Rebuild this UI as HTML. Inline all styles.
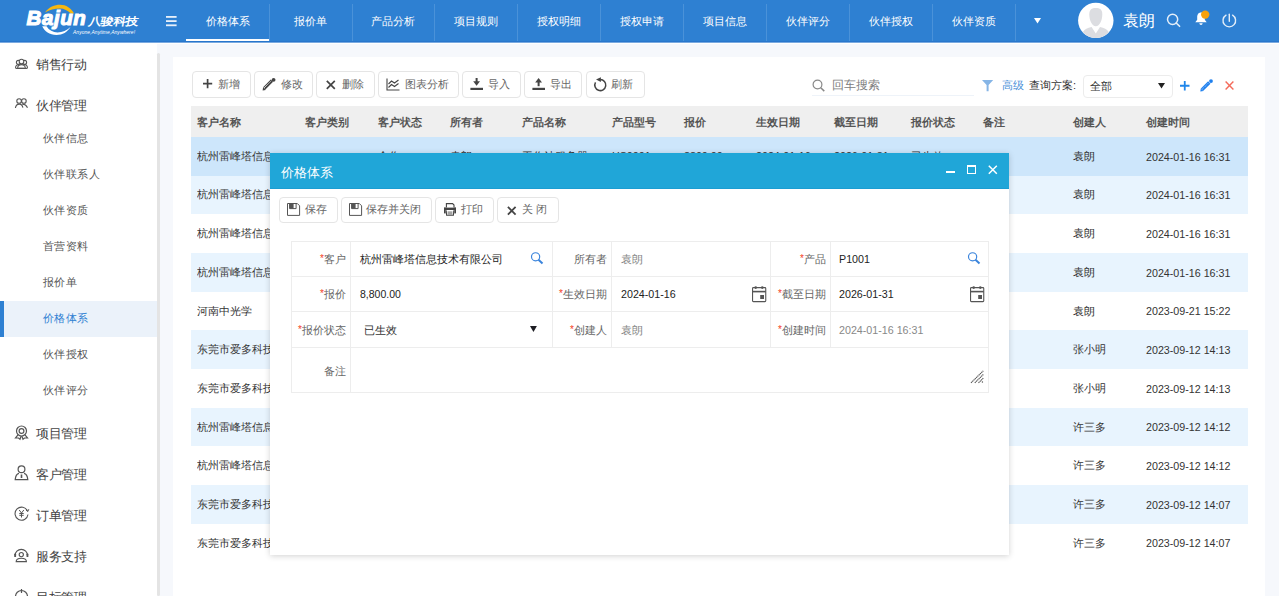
<!DOCTYPE html><html><head><meta charset="utf-8"><style>
*{box-sizing:border-box;margin:0;padding:0}
html,body{width:1279px;height:596px;overflow:hidden;background:#f6f8fc;font-family:"Liberation Sans",sans-serif;color:#333;position:relative}
div{position:absolute;white-space:nowrap}
svg{position:absolute;overflow:visible}
</style></head><body>
<div style="left:0;top:0;width:1279px;height:42px;background:#2e80d2"></div>
<div style="left:0;top:41px;width:1279px;height:1px;background:#2876cc"></div>
<div style="left:0;top:42px;width:1279px;height:1px;background:#7aaae0"></div>
<div style="left:0;top:43px;width:1279px;height:1px;background:#fff"></div>
<svg style="left:0;top:0" width="160" height="42" viewBox="0 0 160 42">
<path d="M45 12.4 C49 7 54.5 4.8 60 4.8 C66 4.8 71.5 8.2 74 13.6 L70.8 13.6 C68 10.4 64 8.4 60 8.4 C54.5 8.4 49.5 10 45 12.4Z" fill="#f6b70f"/>
<path d="M42.2 26.3 L46.5 26.3 C49 30.3 53 32.4 57.5 32.4 C62.5 32.4 67 30.5 70.5 27 C67.5 32 62.5 35 56.5 35 C49.5 35 44.5 31.5 42.2 26.3Z" fill="#fff"/>
<text x="26.5" y="24.8" font-family="Liberation Sans" font-style="italic" font-weight="bold" font-size="20.5" fill="#fff" stroke="#fff" stroke-width="1.1" letter-spacing="0.6">Bajun</text>
<g transform="translate(88,24.6) skewX(-10) scale(1.08,0.9)"><text x="0" y="0" font-family="Liberation Sans" font-weight="bold" font-size="12" fill="#fff" letter-spacing="-0.6">八骏科技</text></g>
<text x="73" y="33.8" font-family="Liberation Sans" font-style="italic" font-size="4.9" fill="#fff" textLength="62">Anyone,Anytime,Anywhere!</text>
</svg>
<svg style="left:165.5px;top:16px" width="12" height="11"><rect x="0" y="0" width="10.6" height="1.8" fill="#e8f0fa"/><rect x="0" y="4.2" width="10.6" height="1.8" fill="#e8f0fa"/><rect x="0" y="8.4" width="10.6" height="1.8" fill="#e8f0fa"/></svg>
<div style="left:186.00px;top:15.5px;width:83px;text-align:center;font-size:11px;line-height:11px;color:#fff">价格体系</div>
<div style="left:269px;top:4px;width:1px;height:37px;background:#4a92d9"></div>
<div style="left:268.93px;top:15.5px;width:83px;text-align:center;font-size:11px;line-height:11px;color:#fff">报价单</div>
<div style="left:352px;top:4px;width:1px;height:37px;background:#4a92d9"></div>
<div style="left:351.86px;top:15.5px;width:83px;text-align:center;font-size:11px;line-height:11px;color:#fff">产品分析</div>
<div style="left:434px;top:4px;width:1px;height:37px;background:#4a92d9"></div>
<div style="left:434.79px;top:15.5px;width:83px;text-align:center;font-size:11px;line-height:11px;color:#fff">项目规则</div>
<div style="left:517px;top:4px;width:1px;height:37px;background:#4a92d9"></div>
<div style="left:517.72px;top:15.5px;width:83px;text-align:center;font-size:11px;line-height:11px;color:#fff">授权明细</div>
<div style="left:600px;top:4px;width:1px;height:37px;background:#4a92d9"></div>
<div style="left:600.65px;top:15.5px;width:83px;text-align:center;font-size:11px;line-height:11px;color:#fff">授权申请</div>
<div style="left:683px;top:4px;width:1px;height:37px;background:#4a92d9"></div>
<div style="left:683.58px;top:15.5px;width:83px;text-align:center;font-size:11px;line-height:11px;color:#fff">项目信息</div>
<div style="left:766px;top:4px;width:1px;height:37px;background:#4a92d9"></div>
<div style="left:766.51px;top:15.5px;width:83px;text-align:center;font-size:11px;line-height:11px;color:#fff">伙伴评分</div>
<div style="left:849px;top:4px;width:1px;height:37px;background:#4a92d9"></div>
<div style="left:849.44px;top:15.5px;width:83px;text-align:center;font-size:11px;line-height:11px;color:#fff">伙伴授权</div>
<div style="left:932px;top:4px;width:1px;height:37px;background:#4a92d9"></div>
<div style="left:932.37px;top:15.5px;width:83px;text-align:center;font-size:11px;line-height:11px;color:#fff">伙伴资质</div>
<div style="left:1015px;top:4px;width:1px;height:37px;background:#4a92d9"></div>
<div style="left:186px;top:39px;width:83px;height:2px;background:#fff"></div>
<svg style="left:1034px;top:17.5px" width="7" height="5.5"><path d="M0 0H7L3.5 5.5Z" fill="#fff"/></svg>
<svg style="left:1077px;top:2px" width="37" height="37" viewBox="0 0 37 37">
<defs><clipPath id="cc"><circle cx="18.8" cy="18.4" r="17.6"/></clipPath></defs>
<circle cx="18.8" cy="18.4" r="17.7" fill="#fff"/>
<g clip-path="url(#cc)" fill="#dcdde1">
<path d="M12.3 12.2 C12.3 7.6 14.8 6 18.8 6 C22.8 6 25.3 7.6 25.3 12.2 C25.3 18.2 22.6 24.2 18.8 24.2 C15 24.2 12.3 18.2 12.3 12.2Z"/>
<path d="M6.2 29.5 C7.5 27 10.5 26 14.6 25 L18.8 31.5 L23 25 C27.1 26 30.1 27 31.4 29.5 L32 40 H5.5 Z"/>
</g>
</svg>
<div style="left:1123px;top:13px;font-size:16px;line-height:16px;color:#fff;font-weight:normal;">袁朗</div>
<svg style="left:1166px;top:13px" width="16" height="16"><circle cx="6.6" cy="6.3" r="5.1" stroke="#e4eef9" stroke-width="1.5" fill="none"/><path d="M10.2 10 L13.6 13.3" stroke="#e4eef9" stroke-width="1.6" stroke-linecap="round"/></svg>
<svg style="left:1193px;top:9px" width="20" height="18" viewBox="0 0 20 18">
<path d="M8 3.5 C5.2 3.5 4.2 5.8 4.2 8.3 L4.2 10.8 L2.3 13.3 L13.7 13.3 L11.8 10.8 L11.8 8.3 C11.8 5.8 10.8 3.5 8 3.5Z" fill="#fff"/>
<path d="M6.4 14.2 H9.6 C9.6 15.4 8.8 15.9 8 15.9 C7.2 15.9 6.4 15.4 6.4 14.2Z" fill="#fff"/>
<circle cx="12.2" cy="5.6" r="4.2" fill="#f6a10c"/>
</svg>
<svg style="left:1221px;top:12px" width="16" height="16"><path d="M5 3.2 A6.3 6.3 0 1 0 11.6 3.2" stroke="#e4eef9" stroke-width="1.4" fill="none" stroke-linecap="round"/><path d="M8.3 2.3 V9.2" stroke="#e4eef9" stroke-width="1.4" stroke-linecap="round"/></svg>
<div style="left:0;top:44px;width:157px;height:552px;background:#fff"></div>
<div style="left:157px;top:53px;width:3px;height:543px;background:#e4e4e4;border-radius:1.5px"></div>
<div style="left:36px;top:58px;font-size:13px;line-height:13px;color:#444;font-weight:normal;letter-spacing:-0.4px">销售行动</div>
<div style="left:36px;top:99px;font-size:13px;line-height:13px;color:#444;font-weight:normal;letter-spacing:-0.4px">伙伴管理</div>
<div style="left:36px;top:426.5px;font-size:13px;line-height:13px;color:#444;font-weight:normal;letter-spacing:-0.4px">项目管理</div>
<div style="left:36px;top:468px;font-size:13px;line-height:13px;color:#444;font-weight:normal;letter-spacing:-0.4px">客户管理</div>
<div style="left:36px;top:509px;font-size:13px;line-height:13px;color:#444;font-weight:normal;letter-spacing:-0.4px">订单管理</div>
<div style="left:36px;top:550px;font-size:13px;line-height:13px;color:#444;font-weight:normal;letter-spacing:-0.4px">服务支持</div>
<div style="left:36px;top:591px;font-size:13px;line-height:13px;color:#444;font-weight:normal;letter-spacing:-0.4px">目标管理</div>
<div style="left:0;top:301px;width:157px;height:36px;background:#ebf2fa"></div>
<div style="left:0;top:301px;width:4px;height:36px;background:#2e80d2"></div>
<div style="left:43px;top:133px;font-size:11px;line-height:11px;color:#555;font-weight:normal;letter-spacing:0.4px">伙伴信息</div>
<div style="left:43px;top:169px;font-size:11px;line-height:11px;color:#555;font-weight:normal;letter-spacing:0.4px">伙伴联系人</div>
<div style="left:43px;top:205px;font-size:11px;line-height:11px;color:#555;font-weight:normal;letter-spacing:0.4px">伙伴资质</div>
<div style="left:43px;top:241px;font-size:11px;line-height:11px;color:#555;font-weight:normal;letter-spacing:0.4px">首营资料</div>
<div style="left:43px;top:277px;font-size:11px;line-height:11px;color:#555;font-weight:normal;letter-spacing:0.4px">报价单</div>
<div style="left:43px;top:313px;font-size:11px;line-height:11px;color:#2e80d2;font-weight:normal;letter-spacing:0.4px">价格体系</div>
<div style="left:43px;top:349px;font-size:11px;line-height:11px;color:#555;font-weight:normal;letter-spacing:0.4px">伙伴授权</div>
<div style="left:43px;top:384.5px;font-size:11px;line-height:11px;color:#555;font-weight:normal;letter-spacing:0.4px">伙伴评分</div>
<svg style="left:12px;top:55px" width="20" height="18" viewBox="0 0 20 18" fill="none" stroke="#555" stroke-width="1.1">
<circle cx="6.4" cy="7.4" r="2"/><circle cx="12.6" cy="7.4" r="2"/>
<path d="M3.6 13.3 C3.3 11.2 4.5 9.8 6.2 9.6 M15.4 13.3 C15.7 11.2 14.5 9.8 12.8 9.6"/>
<circle cx="9.5" cy="6.6" r="2.3" fill="#fff"/>
<path d="M5.6 13.4 C5.6 11 7.2 9.6 9.5 9.6 C11.8 9.6 13.4 11 13.4 13.4 Z" fill="#fff"/>
<path d="M3.8 13.4 H15.2"/>
</svg>
<svg style="left:12px;top:95px" width="20" height="18" viewBox="0 0 20 18" fill="none" stroke="#555" stroke-width="1.1">
<circle cx="7.1" cy="6" r="2.3"/><circle cx="11.9" cy="6" r="2.3"/>
<path d="M3.4 13 C3.8 10.4 5.4 9.1 7.4 9.1 C9.2 9.1 10.4 10.3 10.9 12.6"/>
<path d="M10.2 9.1 C12.6 9.1 14.5 10.5 15.5 12.8"/>
</svg>
<svg style="left:14px;top:425px" width="15" height="15" viewBox="0 0 15 15" fill="none" stroke="#555" stroke-width="1.2">
<circle cx="7.5" cy="6" r="5"/><circle cx="7.5" cy="6" r="2.4"/>
<path d="M4 9.8 L1.5 13 L4.5 13 L6 14.3 L7.2 11"/><path d="M11 9.8 L13.5 13 L10.5 13 L9 14.3 L7.8 11"/>
</svg>
<svg style="left:14px;top:465px" width="15" height="16" viewBox="0 0 15 16" fill="none" stroke="#555" stroke-width="1.2">
<circle cx="7.5" cy="4.3" r="3.4"/>
<path d="M5 8.4 C2.5 9 1.5 11.5 1.2 14.6 H13.8 C13.5 11.5 12.5 9 10 8.4"/>
<path d="M7.5 9.5 V13" stroke-width="1.6"/>
</svg>
<svg style="left:14px;top:506px" width="15" height="15" viewBox="0 0 15 15" fill="none" stroke="#555" stroke-width="1.1">
<path d="M13.5 5 A6.5 6.5 0 1 0 14 8.5"/><path d="M12 4 L13.8 5.6 L14.8 3.2" stroke-width="1"/>
<path d="M5.2 4 L7.5 7 L9.8 4 M7.5 7 V11.5 M5.3 7.5 H9.7 M5.3 9.3 H9.7" stroke-width="1"/>
</svg>
<svg style="left:14px;top:547px" width="15" height="16" viewBox="0 0 15 16" fill="none" stroke="#555" stroke-width="1.15">
<path d="M1.1 8.6 A6.2 6.2 0 0 1 13.5 8.6"/><circle cx="7.3" cy="7.6" r="2.1"/>
<path d="M2.2 14.6 C2.2 12.2 4.4 11.2 7.3 11.2 C10.2 11.2 12.4 12.2 12.4 14.6 Z"/>
<rect x="0.2" y="6.6" width="1.9" height="3.4" rx="0.6" fill="#555" stroke="none"/><rect x="12.5" y="6.6" width="1.9" height="3.4" rx="0.6" fill="#555" stroke="none"/>
</svg>
<svg style="left:14px;top:589px" width="15" height="15" viewBox="0 0 15 15" fill="none" stroke="#555" stroke-width="1.2">
<circle cx="7.5" cy="7.5" r="6"/><path d="M7.5 0 V4"/>
</svg>
<div style="left:173px;top:57px;width:1092px;height:539px;background:#fff"></div>
<div style="left:192px;top:71px;width:59px;height:27px;border:1px solid #e5e5e5;border-radius:4px;background:#fff"></div>
<div style="left:218px;top:79px;font-size:11px;line-height:11px;color:#666;font-weight:normal;">新增</div>
<div style="left:254px;top:71px;width:59px;height:27px;border:1px solid #e5e5e5;border-radius:4px;background:#fff"></div>
<div style="left:281px;top:79px;font-size:11px;line-height:11px;color:#666;font-weight:normal;">修改</div>
<div style="left:316px;top:71px;width:59px;height:27px;border:1px solid #e5e5e5;border-radius:4px;background:#fff"></div>
<div style="left:342px;top:79px;font-size:11px;line-height:11px;color:#666;font-weight:normal;">删除</div>
<div style="left:378px;top:71px;width:81px;height:27px;border:1px solid #e5e5e5;border-radius:4px;background:#fff"></div>
<div style="left:405px;top:79px;font-size:11px;line-height:11px;color:#666;font-weight:normal;">图表分析</div>
<div style="left:462px;top:71px;width:59px;height:27px;border:1px solid #e5e5e5;border-radius:4px;background:#fff"></div>
<div style="left:488px;top:79px;font-size:11px;line-height:11px;color:#666;font-weight:normal;">导入</div>
<div style="left:524px;top:71px;width:58px;height:27px;border:1px solid #e5e5e5;border-radius:4px;background:#fff"></div>
<div style="left:550px;top:79px;font-size:11px;line-height:11px;color:#666;font-weight:normal;">导出</div>
<div style="left:586px;top:71px;width:59px;height:27px;border:1px solid #e5e5e5;border-radius:4px;background:#fff"></div>
<div style="left:611px;top:79px;font-size:11px;line-height:11px;color:#666;font-weight:normal;">刷新</div>
<svg style="left:203px;top:79px" width="10" height="10"><path d="M4.6 0V9.2M0 4.6H9.2" stroke="#444" stroke-width="1.7"/></svg>
<svg style="left:258px;top:74px" width="22" height="20" viewBox="0 0 22 20"><path d="M6.3 14.3 L13.9 6.7" stroke="#444" stroke-width="3.2"/><path d="M4.6 16.4 L5.1 13.2 L7.8 15.9Z" fill="#444"/><path d="M6.0 14.0 L13.0 7.1" stroke="#fff" stroke-width="0.9" stroke-dasharray="1.1 0.5"/><circle cx="15.6" cy="5.8" r="1.9" fill="#444"/></svg>
<svg style="left:326px;top:80px" width="10" height="10"><path d="M0.8 0.8L8.8 8.8M8.8 0.8L0.8 8.8" stroke="#444" stroke-width="1.7"/></svg>
<svg style="left:386px;top:78px" width="14" height="13" viewBox="0 0 14 13" fill="none" stroke="#444" stroke-width="1.1"><path d="M1 0.5V12H13.5"/><path d="M2.5 6 L5.5 3 L8.5 5 L12.5 2"/><path d="M2.5 9.5 L5.5 6.5 L8.5 8.5 L12.5 5.5"/></svg>
<svg style="left:470px;top:78px" width="14" height="13" viewBox="0 0 14 13"><path d="M6.6 0V4.5" stroke="#444" stroke-width="2"/><path d="M3.2 3.2 L10 3.2 L6.6 7.7Z" fill="#444"/><rect x="0.4" y="9.8" width="12.6" height="2.2" fill="#444"/></svg>
<svg style="left:532px;top:78px" width="14" height="13" viewBox="0 0 14 13"><path d="M6.6 3.5V8.2" stroke="#444" stroke-width="2"/><path d="M3.2 4.5 L10 4.5 L6.6 0Z" fill="#444"/><rect x="0.4" y="9.8" width="12.6" height="2.2" fill="#444"/></svg>
<svg style="left:590px;top:74px" width="22" height="20" viewBox="0 0 22 20"><path d="M5.5 8.4 A5.5 5.5 0 1 0 10.2 5.6" fill="none" stroke="#444" stroke-width="1.5"/><path d="M6 5.4 L10.9 3.2 L10.9 7.9Z" fill="#444"/></svg>
<svg style="left:812px;top:79px" width="14" height="14"><circle cx="5.5" cy="5.5" r="4.4" stroke="#888" stroke-width="1.2" fill="none"/><path d="M8.7 8.7 L12.3 12.1" stroke="#888" stroke-width="1.5"/></svg>
<div style="left:832px;top:79px;font-size:12px;line-height:12px;color:#808080;font-weight:normal;">回车搜索</div>
<div style="left:812px;top:95px;width:162px;height:1px;background:#eef3f9"></div>
<svg style="left:981.8px;top:80px" width="12" height="12"><path d="M0 0H11.2L6.6 5V11.2H4.6V5Z" fill="#86b5e6"/></svg>
<div style="left:1002px;top:80px;font-size:11px;line-height:11px;color:#4a90d9;font-weight:normal;">高级</div>
<div style="left:1029px;top:80px;font-size:11px;line-height:11px;color:#333;font-weight:normal;">查询方案:</div>
<div style="left:1083px;top:75px;width:90px;height:23px;border:1px solid #ececec;border-radius:4px;background:#fff"></div>
<div style="left:1090px;top:81px;font-size:11px;line-height:11px;color:#333;font-weight:normal;">全部</div>
<svg style="left:1158px;top:83px" width="7" height="6"><path d="M0 0H7L3.5 5.6Z" fill="#222"/></svg>
<svg style="left:1179.5px;top:81px" width="10" height="10"><path d="M4.75 0V9.5M0 4.75H9.5" stroke="#1f86ea" stroke-width="1.8"/></svg>
<svg style="left:1196px;top:74px" width="22" height="20" viewBox="0 0 22 20"><path d="M6.1 15.6 L13.3 8.5" stroke="#1f80ee" stroke-width="3.4"/><path d="M4.3 17.6 L4.8 14.4 L7.5 17.1Z" fill="#1f80ee"/><path d="M6.2 15.2 L12.6 8.9" stroke="#cfe4fc" stroke-width="0.7" stroke-dasharray="0.9 0.6"/><circle cx="15" cy="7.1" r="1.9" fill="#1f80ee"/></svg>
<svg style="left:1224.5px;top:81px" width="10" height="10"><path d="M0.6 0.6L8.4 8.4M8.4 0.6L0.6 8.4" stroke="#f46b5b" stroke-width="1.45"/></svg>
<div style="left:191px;top:106px;width:1057px;height:31px;background:#efefef"></div>
<div style="left:197px;top:117px;font-size:11px;line-height:11px;color:#555;font-weight:bold;">客户名称</div>
<div style="left:305px;top:117px;font-size:11px;line-height:11px;color:#555;font-weight:bold;">客户类别</div>
<div style="left:378px;top:117px;font-size:11px;line-height:11px;color:#555;font-weight:bold;">客户状态</div>
<div style="left:450px;top:117px;font-size:11px;line-height:11px;color:#555;font-weight:bold;">所有者</div>
<div style="left:522px;top:117px;font-size:11px;line-height:11px;color:#555;font-weight:bold;">产品名称</div>
<div style="left:612px;top:117px;font-size:11px;line-height:11px;color:#555;font-weight:bold;">产品型号</div>
<div style="left:684px;top:117px;font-size:11px;line-height:11px;color:#555;font-weight:bold;">报价</div>
<div style="left:756px;top:117px;font-size:11px;line-height:11px;color:#555;font-weight:bold;">生效日期</div>
<div style="left:834px;top:117px;font-size:11px;line-height:11px;color:#555;font-weight:bold;">截至日期</div>
<div style="left:911px;top:117px;font-size:11px;line-height:11px;color:#555;font-weight:bold;">报价状态</div>
<div style="left:983px;top:117px;font-size:11px;line-height:11px;color:#555;font-weight:bold;">备注</div>
<div style="left:1073px;top:117px;font-size:11px;line-height:11px;color:#555;font-weight:bold;">创建人</div>
<div style="left:1146px;top:117px;font-size:11px;line-height:11px;color:#555;font-weight:bold;">创建时间</div>
<div style="left:191px;top:137.00px;width:1057px;height:38.68px;background:#cde6fb"></div>
<div style="left:197px;top:150.8px;font-size:10.7px;line-height:10.7px;color:#333;font-weight:normal;width:73px;overflow:hidden">杭州雷峰塔信息技术有限公司</div>
<div style="left:378px;top:150.6px;font-size:10.7px;line-height:10.7px;color:#333;font-weight:normal;">合作</div>
<div style="left:450px;top:150.6px;font-size:10.7px;line-height:10.7px;color:#333;font-weight:normal;">袁朗</div>
<div style="left:522px;top:150.6px;font-size:10.7px;line-height:10.7px;color:#333;font-weight:normal;">工作站服务器</div>
<div style="left:612px;top:150.9px;font-size:10.7px;line-height:10.7px;color:#333;font-weight:normal;">HS0001</div>
<div style="left:684px;top:150.9px;font-size:10.7px;line-height:10.7px;color:#333;font-weight:normal;">8800.00</div>
<div style="left:756px;top:150.9px;font-size:10.7px;line-height:10.7px;color:#333;font-weight:normal;">2024-01-16</div>
<div style="left:834px;top:150.9px;font-size:10.7px;line-height:10.7px;color:#333;font-weight:normal;">2026-01-31</div>
<div style="left:911px;top:150.6px;font-size:10.7px;line-height:10.7px;color:#333;font-weight:normal;">已生效</div>
<div style="left:1073px;top:150.8px;font-size:10.7px;line-height:10.7px;color:#333;font-weight:normal;">袁朗</div>
<div style="left:1146px;top:151.5px;font-size:10.7px;line-height:10.7px;color:#333;font-weight:normal;">2024-01-16 16:31</div>
<div style="left:191px;top:175.68px;width:1057px;height:38.68px;background:#e8f4fe"></div>
<div style="left:197px;top:189.48px;font-size:10.7px;line-height:10.7px;color:#333;font-weight:normal;width:73px;overflow:hidden">杭州雷峰塔信息技术有限公司</div>
<div style="left:1073px;top:189.48px;font-size:10.7px;line-height:10.7px;color:#333;font-weight:normal;">袁朗</div>
<div style="left:1146px;top:190.18px;font-size:10.7px;line-height:10.7px;color:#333;font-weight:normal;">2024-01-16 16:31</div>
<div style="left:191px;top:214.36px;width:1057px;height:38.68px;background:#fff"></div>
<div style="left:197px;top:228.16px;font-size:10.7px;line-height:10.7px;color:#333;font-weight:normal;width:73px;overflow:hidden">杭州雷峰塔信息技术有限公司</div>
<div style="left:1073px;top:228.16px;font-size:10.7px;line-height:10.7px;color:#333;font-weight:normal;">袁朗</div>
<div style="left:1146px;top:228.86px;font-size:10.7px;line-height:10.7px;color:#333;font-weight:normal;">2024-01-16 16:31</div>
<div style="left:191px;top:253.04px;width:1057px;height:38.68px;background:#e8f4fe"></div>
<div style="left:197px;top:266.84px;font-size:10.7px;line-height:10.7px;color:#333;font-weight:normal;width:73px;overflow:hidden">杭州雷峰塔信息技术有限公司</div>
<div style="left:1073px;top:266.84px;font-size:10.7px;line-height:10.7px;color:#333;font-weight:normal;">袁朗</div>
<div style="left:1146px;top:267.54px;font-size:10.7px;line-height:10.7px;color:#333;font-weight:normal;">2024-01-16 16:31</div>
<div style="left:191px;top:291.72px;width:1057px;height:38.68px;background:#fff"></div>
<div style="left:197px;top:305.52px;font-size:10.7px;line-height:10.7px;color:#333;font-weight:normal;width:73px;overflow:hidden">河南中光学</div>
<div style="left:1073px;top:305.52px;font-size:10.7px;line-height:10.7px;color:#333;font-weight:normal;">袁朗</div>
<div style="left:1146px;top:306.22px;font-size:10.7px;line-height:10.7px;color:#333;font-weight:normal;">2023-09-21 15:22</div>
<div style="left:191px;top:330.40px;width:1057px;height:38.68px;background:#e8f4fe"></div>
<div style="left:197px;top:344.2px;font-size:10.7px;line-height:10.7px;color:#333;font-weight:normal;width:73px;overflow:hidden">东莞市爱多科技有限公司</div>
<div style="left:1073px;top:344.2px;font-size:10.7px;line-height:10.7px;color:#333;font-weight:normal;">张小明</div>
<div style="left:1146px;top:344.9px;font-size:10.7px;line-height:10.7px;color:#333;font-weight:normal;">2023-09-12 14:13</div>
<div style="left:191px;top:369.08px;width:1057px;height:38.68px;background:#fff"></div>
<div style="left:197px;top:382.88px;font-size:10.7px;line-height:10.7px;color:#333;font-weight:normal;width:73px;overflow:hidden">东莞市爱多科技有限公司</div>
<div style="left:1073px;top:382.88px;font-size:10.7px;line-height:10.7px;color:#333;font-weight:normal;">张小明</div>
<div style="left:1146px;top:383.58px;font-size:10.7px;line-height:10.7px;color:#333;font-weight:normal;">2023-09-12 14:13</div>
<div style="left:191px;top:407.76px;width:1057px;height:38.68px;background:#e8f4fe"></div>
<div style="left:197px;top:421.56px;font-size:10.7px;line-height:10.7px;color:#333;font-weight:normal;width:73px;overflow:hidden">杭州雷峰塔信息技术有限公司</div>
<div style="left:1073px;top:421.56px;font-size:10.7px;line-height:10.7px;color:#333;font-weight:normal;">许三多</div>
<div style="left:1146px;top:422.26px;font-size:10.7px;line-height:10.7px;color:#333;font-weight:normal;">2023-09-12 14:12</div>
<div style="left:191px;top:446.44px;width:1057px;height:38.68px;background:#fff"></div>
<div style="left:197px;top:460.24px;font-size:10.7px;line-height:10.7px;color:#333;font-weight:normal;width:73px;overflow:hidden">杭州雷峰塔信息技术有限公司</div>
<div style="left:1073px;top:460.24px;font-size:10.7px;line-height:10.7px;color:#333;font-weight:normal;">许三多</div>
<div style="left:1146px;top:460.94px;font-size:10.7px;line-height:10.7px;color:#333;font-weight:normal;">2023-09-12 14:12</div>
<div style="left:191px;top:485.12px;width:1057px;height:38.68px;background:#e8f4fe"></div>
<div style="left:197px;top:498.92px;font-size:10.7px;line-height:10.7px;color:#333;font-weight:normal;width:73px;overflow:hidden">东莞市爱多科技有限公司</div>
<div style="left:1073px;top:498.92px;font-size:10.7px;line-height:10.7px;color:#333;font-weight:normal;">许三多</div>
<div style="left:1146px;top:499.62px;font-size:10.7px;line-height:10.7px;color:#333;font-weight:normal;">2023-09-12 14:07</div>
<div style="left:191px;top:523.80px;width:1057px;height:38.68px;background:#fff"></div>
<div style="left:197px;top:537.6px;font-size:10.7px;line-height:10.7px;color:#333;font-weight:normal;width:73px;overflow:hidden">东莞市爱多科技有限公司</div>
<div style="left:1073px;top:537.6px;font-size:10.7px;line-height:10.7px;color:#333;font-weight:normal;">许三多</div>
<div style="left:1146px;top:538.3px;font-size:10.7px;line-height:10.7px;color:#333;font-weight:normal;">2023-09-12 14:07</div>
<div style="left:270px;top:153px;width:739px;height:402px;background:#fff;box-shadow:0 1px 6px rgba(0,0,0,.18)"></div>
<div style="left:270px;top:153px;width:739px;height:36px;background:#20a6d8"></div>
<div style="left:270px;top:188px;width:739px;height:1px;background:#1b9dd2"></div>
<div style="left:281px;top:166px;font-size:13px;line-height:13px;color:#fff;font-weight:normal;">价格体系</div>
<div style="left:946px;top:171px;width:9px;height:2px;background:#fff"></div>
<div style="left:967px;top:165px;width:9px;height:9px;border:1px solid #fff;border-top-width:2px"></div>
<svg style="left:988px;top:165px" width="10" height="10"><path d="M0.8 0.8L8.8 8.8M8.8 0.8L0.8 8.8" stroke="#fff" stroke-width="1.5"/></svg>
<div style="left:279px;top:197px;width:59px;height:26px;border:1px solid #e5e5e5;border-radius:4px;background:#fff"></div>
<div style="left:305px;top:204px;font-size:11px;line-height:11px;color:#666;font-weight:normal;">保存</div>
<div style="left:341px;top:197px;width:91px;height:26px;border:1px solid #e5e5e5;border-radius:4px;background:#fff"></div>
<div style="left:366px;top:204px;font-size:11px;line-height:11px;color:#666;font-weight:normal;">保存并关闭</div>
<div style="left:435px;top:197px;width:59px;height:26px;border:1px solid #e5e5e5;border-radius:4px;background:#fff"></div>
<div style="left:461px;top:204px;font-size:11px;line-height:11px;color:#666;font-weight:normal;">打印</div>
<div style="left:497px;top:197px;width:62px;height:26px;border:1px solid #e5e5e5;border-radius:4px;background:#fff"></div>
<div style="left:522px;top:204px;font-size:11px;line-height:11px;color:#666;font-weight:normal;">关 闭</div>
<svg style="left:287px;top:203px" width="14" height="14" viewBox="0 0 14 14" fill="none" stroke="#555" stroke-width="1"><path d="M0.5 0.5H10.3L12.6 2.8V12.4H0.5Z"/><path d="M2.6 0.5V5.6H9.1V0.5"/><rect x="2.6" y="0.5" width="4" height="5.1" fill="#555" stroke="none"/></svg>
<svg style="left:349px;top:203px" width="14" height="14" viewBox="0 0 14 14" fill="none" stroke="#555" stroke-width="1"><path d="M0.5 0.5H10.3L12.6 2.8V12.4H0.5Z"/><path d="M2.6 0.5V5.6H9.1V0.5"/><rect x="2.6" y="0.5" width="4" height="5.1" fill="#555" stroke="none"/></svg>
<svg style="left:444px;top:203px" width="14" height="14" viewBox="0 0 14 14"><path d="M2.4 4.6V0.6H8.6L10 2V4.6" fill="none" stroke="#444" stroke-width="1.1"/><rect x="0" y="4.6" width="12" height="2.4" fill="#444"/><rect x="0" y="4.6" width="1.7" height="5.8" fill="#444"/><rect x="10.3" y="4.6" width="1.7" height="5.8" fill="#444"/><path d="M2.2 7.4 L2.6 12.3 H9.4 L9.8 7.4" fill="none" stroke="#444" stroke-width="1.1"/><path d="M3.6 9.1H8.4M3.6 10.9H8.4" stroke="#555" stroke-width="0.9"/></svg>
<svg style="left:507px;top:205.5px" width="10" height="10"><path d="M0.9 0.9L8.6 8.6M8.6 0.9L0.9 8.6" stroke="#444" stroke-width="1.8"/></svg>
<div style="left:291px;top:241px;width:698px;height:152px;border:1px solid #ededed"></div>
<div style="left:291px;top:276px;width:698px;height:1px;background:#ededed"></div>
<div style="left:291px;top:311px;width:698px;height:1px;background:#ededed"></div>
<div style="left:291px;top:347px;width:698px;height:1px;background:#ededed"></div>
<div style="left:350px;top:241px;width:1px;height:152px;background:#ededed"></div>
<div style="left:552px;top:241px;width:1px;height:106px;background:#ededed"></div>
<div style="left:611px;top:241px;width:1px;height:106px;background:#ededed"></div>
<div style="left:770px;top:241px;width:1px;height:106px;background:#ededed"></div>
<div style="left:830px;top:241px;width:1px;height:106px;background:#ededed"></div>
<div style="left:226px;top:254px;width:120px;text-align:right;font-size:11px;line-height:11px;color:#666"><span style="color:#f4401c;font-size:10px;position:relative;top:-1px">*</span>客户</div>
<div style="left:487px;top:254px;width:120px;text-align:right;font-size:11px;line-height:11px;color:#666">所有者</div>
<div style="left:706px;top:254px;width:120px;text-align:right;font-size:11px;line-height:11px;color:#666"><span style="color:#f4401c;font-size:10px;position:relative;top:-1px">*</span>产品</div>
<div style="left:226px;top:289px;width:120px;text-align:right;font-size:11px;line-height:11px;color:#666"><span style="color:#f4401c;font-size:10px;position:relative;top:-1px">*</span>报价</div>
<div style="left:487px;top:289px;width:120px;text-align:right;font-size:11px;line-height:11px;color:#666"><span style="color:#f4401c;font-size:10px;position:relative;top:-1px">*</span>生效日期</div>
<div style="left:706px;top:289px;width:120px;text-align:right;font-size:11px;line-height:11px;color:#666"><span style="color:#f4401c;font-size:10px;position:relative;top:-1px">*</span>截至日期</div>
<div style="left:226px;top:325px;width:120px;text-align:right;font-size:11px;line-height:11px;color:#666"><span style="color:#f4401c;font-size:10px;position:relative;top:-1px">*</span>报价状态</div>
<div style="left:487px;top:325px;width:120px;text-align:right;font-size:11px;line-height:11px;color:#666"><span style="color:#f4401c;font-size:10px;position:relative;top:-1px">*</span>创建人</div>
<div style="left:706px;top:325px;width:120px;text-align:right;font-size:11px;line-height:11px;color:#666"><span style="color:#f4401c;font-size:10px;position:relative;top:-1px">*</span>创建时间</div>
<div style="left:226px;top:366px;width:120px;text-align:right;font-size:11px;line-height:11px;color:#666">备注</div>
<div style="left:360px;top:254px;font-size:11px;line-height:11px;color:#222;font-weight:normal;">杭州雷峰塔信息技术有限公司</div>
<div style="left:621px;top:254px;font-size:11px;line-height:11px;color:#888;font-weight:normal;">袁朗</div>
<div style="left:839px;top:254px;font-size:10.7px;line-height:10.7px;color:#222;font-weight:normal;">P1001</div>
<div style="left:360px;top:289px;font-size:10.5px;line-height:10.5px;color:#222;font-weight:normal;">8,800.00</div>
<div style="left:621px;top:289px;font-size:10.7px;line-height:10.7px;color:#222;font-weight:normal;">2024-01-16</div>
<div style="left:839px;top:289px;font-size:10.7px;line-height:10.7px;color:#222;font-weight:normal;">2026-01-31</div>
<div style="left:364px;top:325px;font-size:11px;line-height:11px;color:#333;font-weight:normal;">已生效</div>
<div style="left:621px;top:325px;font-size:11px;line-height:11px;color:#888;font-weight:normal;">袁朗</div>
<div style="left:839px;top:325px;font-size:10.7px;line-height:10.7px;color:#888;font-weight:normal;">2024-01-16 16:31</div>
<svg style="left:530px;top:252px" width="14" height="13"><circle cx="5.6" cy="4.8" r="4.1" stroke="#3a84dc" stroke-width="1.15" fill="none"/><path d="M8.5 7.8 L12.5 11.5" stroke="#3a84dc" stroke-width="2"/></svg>
<svg style="left:967px;top:252px" width="14" height="13"><circle cx="5.6" cy="4.8" r="4.1" stroke="#3a84dc" stroke-width="1.15" fill="none"/><path d="M8.5 7.8 L12.5 11.5" stroke="#3a84dc" stroke-width="2"/></svg>
<svg style="left:752px;top:286px" width="15" height="16" viewBox="0 0 15 16" fill="none" stroke="#555" stroke-width="1.1"><rect x="0.55" y="1.6" width="13.2" height="14" rx="0.8"/><path d="M0.6 5.6H13.7" stroke-width="1.6"/><circle cx="3.7" cy="1.6" r="1.3" fill="#555" stroke="none"/><circle cx="10.3" cy="1.6" r="1.3" fill="#555" stroke="none"/><rect x="8.2" y="9" width="3.8" height="4" fill="#555" stroke="none"/></svg>
<svg style="left:970px;top:286px" width="15" height="16" viewBox="0 0 15 16" fill="none" stroke="#555" stroke-width="1.1"><rect x="0.55" y="1.6" width="13.2" height="14" rx="0.8"/><path d="M0.6 5.6H13.7" stroke-width="1.6"/><circle cx="3.7" cy="1.6" r="1.3" fill="#555" stroke="none"/><circle cx="10.3" cy="1.6" r="1.3" fill="#555" stroke="none"/><rect x="8.2" y="9" width="3.8" height="4" fill="#555" stroke="none"/></svg>
<svg style="left:530.3px;top:326px" width="8" height="7"><path d="M0 0H6.9L3.45 6Z" fill="#1e1e24"/></svg>
<svg style="left:970px;top:370px" width="15" height="15" fill="none" stroke="#555" stroke-width="1.1" stroke-dasharray="1.3 0.5"><path d="M1 12.8L13.3 0.8M4.8 12.8L13.3 4.5M8.5 12.8L13.3 8.2"/><circle cx="12.4" cy="12" r="0.7" fill="#555" stroke="none"/></svg>
</body></html>
